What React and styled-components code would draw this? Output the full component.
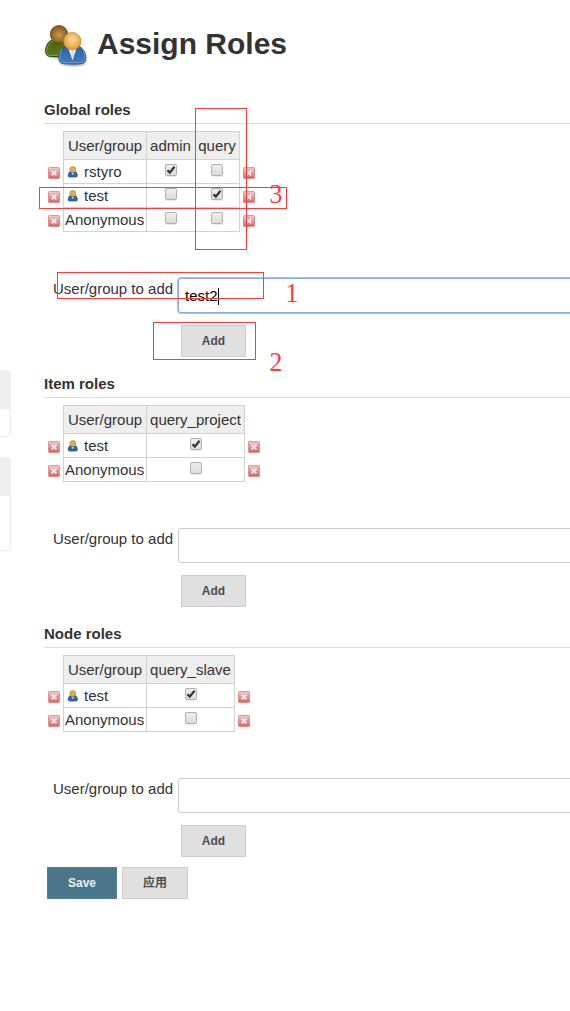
import React from 'react';
import styled, { createGlobalStyle } from 'styled-components';

const GlobalStyle = createGlobalStyle`
  body {
    margin: 0;
    background: #fff;
    color: #333;
    font: 15px/20px "Liberation Sans", Arial, "Noto Sans CJK SC", sans-serif;
    overflow: hidden;
  }
  * { box-sizing: border-box; }
`;

const Page = styled.div`
  position: relative;
  display: flex;
  height: 1011px;
  overflow: hidden;
`;

const SidePanel = styled.aside`
  flex: none;
  width: 11px;
  margin-right: 33px;
  padding-top: 370px;
`;

const Pane = styled.div`
  height: ${(p) => p.$height}px;
  margin-bottom: 20px;
  border: 1px solid #eee;
  border-left: 0;
  border-radius: 0 4px 4px 0;
  overflow: hidden;
`;

const PaneHeader = styled.div`
  height: 38px;
  background: #eee;
`;

const Main = styled.main`
  flex: 1;
  min-width: 0;
`;

const TitleBar = styled.header`
  display: flex;
  align-items: center;
  height: 100px;
  padding: 0 0 12px 0;
`;

const Title = styled.h1`
  margin: 0 0 0 5px;
  font-size: 30px;
  line-height: 36px;
  font-weight: bold;
  white-space: nowrap;
`;

const Section = styled.section`
  margin-bottom: ${(p) => (p.$last ? 10 : 17)}px;
`;

const Heading = styled.h2`
  height: 24px;
  margin: 0 0 7px;
  border-bottom: 1px solid #ddd;
  font-size: 15px;
  line-height: 20px;
`;

const Matrix = styled.div`
  margin-bottom: 46px;
`;

const Row = styled.div`
  display: grid;
  grid-template-columns: 19px 84px ${(p) => p.$cols.map((c) => `${c}px`).join(' ')} 20px;
  height: ${(p) => (p.$head ? 29 : 24)}px;
`;

const Cell = styled.div`
  display: flex;
  align-items: center;
  justify-content: ${(p) => (p.$name ? 'flex-start' : 'center')};
  border: solid #d3d3cd;
  border-width: ${(p) => (p.$head ? 1 : 0)}px 1px 1px ${(p) => (p.$first ? 1 : 0)}px;
  background: ${(p) => (p.$head ? '#eee' : '#fff')};
  padding-left: ${(p) => (p.$name ? 1 : 0)}px;
  padding-right: ${(p) => (p.$tight ? 1 : 0)}px;
  padding-top: ${(p) => (p.$head || p.$name ? 1 : 0)}px;
  white-space: nowrap;
`;

const UserName = styled.span`
  margin-left: 5px;
`;

const RemoveSlot = styled.span`
  display: flex;
  padding: 7px 0 0 ${(p) => (p.$right ? 3 : 4)}px;
`;

const Check = styled.span`
  display: flex;
  width: 12px;
  height: 12px;
  margin-bottom: 3px;
  border: 1px solid #b0b0b0;
  border-radius: 2px;
  background: linear-gradient(#eee, #dcdcdc);
  box-shadow: 0 1px 0 rgba(0, 0, 0, 0.08);
`;

const Field = styled.div`
  display: flex;
  height: 35px;
  padding-left: 9px;
  margin-bottom: 12px;
`;

const Label = styled.label`
  width: 125px;
  line-height: 22px;
  white-space: nowrap;
`;

const TextBox = styled.div`
  flex: 1;
  display: flex;
  align-items: center;
  margin-right: -10px;
  padding: 1px 0 0 6px;
  border: 1px solid ${(p) => (p.$focus ? '#86abe6' : '#ccc')};
  border-radius: 3px;
  box-shadow: ${(p) => (p.$focus ? '0 0 0 1px #a5c1f0' : 'none')};
  color: #000;
`;

const Caret = styled.span`
  width: 1px;
  height: 17px;
  background: #000;
`;

const Button = styled.button`
  display: block;
  width: ${(p) => p.$width}px;
  height: 32px;
  padding: 0;
  margin-left: ${(p) => p.$indent || 0}px;
  border: 1px solid ${(p) => (p.$primary ? '#4d819a' : '#ccc')};
  background: ${(p) => (p.$primary ? '#4b758b' : '#e0e0e0')};
  color: ${(p) => (p.$primary ? '#eee' : '#4d4d4d')};
  font: bold 12px/18px "Liberation Sans", Arial, "Noto Sans CJK SC", sans-serif;
`;

const Actions = styled.div`
  display: flex;
  gap: 5px;
  padding-left: 3px;
`;

const MarkBox = styled.div`
  position: absolute;
  left: ${(p) => p.$x}px;
  top: ${(p) => p.$y}px;
  width: ${(p) => p.$w}px;
  height: ${(p) => p.$h}px;
  border: 1px solid #fa3c3c;
`;

const MarkNumber = styled.span`
  position: absolute;
  left: ${(p) => p.$x}px;
  top: ${(p) => p.$y}px;
  color: #fa3c3c;
  font: 28px/28px "Liberation Serif", serif;
  transform: scaleX(0.92);
`;

function PeopleIcon() {
  return (
    <svg width="48" height="48" viewBox="0 0 48 48">
      <defs>
        <radialGradient id="brown" cx=".5" cy=".55" r=".55">
          <stop offset="0" stopColor="#c69a58" /><stop offset="1" stopColor="#875516" />
        </radialGradient>
        <radialGradient id="gold" cx=".5" cy=".4" r=".6">
          <stop offset="0" stopColor="#fbdca6" /><stop offset="1" stopColor="#e59a25" />
        </radialGradient>
        <linearGradient id="green" x2="0" y2="1">
          <stop offset="0" stopColor="#4b6410" /><stop offset="1" stopColor="#58781a" />
        </linearGradient>
        <linearGradient id="blue" x2="0" y2="1">
          <stop offset="0" stopColor="#2c62a6" /><stop offset="1" stopColor="#3f7cc0" />
        </linearGradient>
        <radialGradient id="shade">
          <stop offset="0" stopColor="#000" stopOpacity=".55" /><stop offset="1" stopColor="#000" stopOpacity="0" />
        </radialGradient>
      </defs>
      <ellipse cx="16" cy="36" rx="15" ry="4" fill="url(#shade)" />
      <ellipse cx="29.500" cy="43.500" rx="15" ry="4" fill="url(#shade)" />
      <path d="M1.500 31.500c0-6 3-10.500 7.500-12h12c5 2 7 6 7 12 0 3-2 5-5 5h-15.500c-4 0-6-2-6-5z" fill="url(#green)" stroke="#334a08" />
      <path d="M2.700 31.500c0-5 3-9 6.500-10.700M3 33c.5 2 2 2.500 4 2.500h7" fill="none" stroke="#8ea957" strokeWidth=".8" />
      <circle cx="15" cy="14.200" r="8.700" fill="url(#brown)" stroke="#704510" strokeWidth=".8" />
      <path d="M14.900 38.500c0-5.500 3-10.500 8-12.500h11c5 1.500 8 6.500 8 12.500 0 3.500-2 5.300-6 5.300h-15c-4 0-6-1.800-6-5.300z" fill="url(#blue)" stroke="#204a87" />
      <path d="M18 28.500c-1.500 2.500-2.100 6-2.100 10 0 3 1.700 4.300 5 4.300h15c3.300 0 5-1.300 5-4.300 0-4-.8-7.500-2.600-10" fill="none" stroke="#81a8d4" strokeWidth=".8" />
      <path d="M24.500 29h7.700L28.600 40.300z" fill="#fff" />
      <path d="M27.500 30h2l.5 5-1.400 4-1.400-4z" fill="#d4dce6" />
      <circle cx="28.300" cy="21.200" r="8.700" fill="url(#gold)" stroke="#cc861d" strokeWidth=".8" />
    </svg>
  );
}

function UserIcon() {
  return (
    <svg width="12" height="12" viewBox="0 0 12 12" style={{ marginLeft: 2 }}>
      <path d="M.8 9.300C.8 7 2.300 5.500 3.800 5h4c1.500.5 3 2 3 4.300 0 1.500-1 2.200-2.200 2.200h-5.600C1.600 11.500.8 10.800.8 9.300z" fill="#2d65a8" />
      <path d="M4.600 7h2.400L5.800 9.500z" fill="#b9cde6" />
      <circle cx="5.800" cy="3.600" r="3" fill="#e3aa54" stroke="#bd8536" strokeWidth=".7" />
    </svg>
  );
}

function RemoveIcon() {
  return (
    <svg width="12" height="13" viewBox="0 0 12 13">
      <defs>
        <linearGradient id="remove" x2="0" y2="1">
          <stop offset="0" stopColor="#f2cccc" /><stop offset=".5" stopColor="#e89393" /><stop offset="1" stopColor="#e06060" />
        </linearGradient>
      </defs>
      <rect x=".5" y=".5" width="11" height="11" rx=".8" fill="url(#remove)" stroke="#dc7575" strokeOpacity=".7" />
      <path d="M3.700 3.800l4.600 4.600M8.300 3.800L3.700 8.400" stroke="#fff" strokeOpacity=".9" strokeWidth="1.600" />
    </svg>
  );
}

function Checkbox({ checked }) {
  return (
    <Check>
      {checked && (
        <svg width="10" height="10" viewBox="0 0 10 10">
          <path d="M1.500 5.200L3.800 7.600 8.500 1.800" fill="none" stroke="#333" strokeWidth="2.200" />
        </svg>
      )}
    </Check>
  );
}

function Remove({ right }) {
  return <RemoveSlot $right={right}><RemoveIcon /></RemoveSlot>;
}

function RoleSection({ title, roles, widths, rows, value, last }) {
  return (
    <Section $last={last}>
      <Heading>{title}</Heading>
      <Matrix>
        <Row $head $cols={widths}>
          <span />
          <Cell $head $first>User/group</Cell>
          {roles.map((role, i) => <Cell $head $tight={widths[i] < 50} key={role}>{role}</Cell>)}
        </Row>
        {rows.map(([name, ...checks]) => (
          <Row key={name} $cols={widths}>
            <Remove />
            <Cell $first $name>
              {name === 'Anonymous' ? name : <><UserIcon /><UserName>{name}</UserName></>}
            </Cell>
            {checks.map((on, i) => (
              <Cell key={roles[i]} $tight={widths[i] < 45}><Checkbox checked={on} /></Cell>
            ))}
            <Remove right />
          </Row>
        ))}
      </Matrix>
      <Field>
        <Label>User/group to add</Label>
        <TextBox $focus={!!value}>{value}{value && <Caret />}</TextBox>
      </Field>
      <Button $width={65} $indent={137}>Add</Button>
    </Section>
  );
}

export default function App() {
  return (
    <Page>
      <GlobalStyle />
      <SidePanel>
        <Pane $height={67}><PaneHeader /></Pane>
        <Pane $height={94}><PaneHeader /></Pane>
      </SidePanel>
      <Main>
        <TitleBar>
          <PeopleIcon />
          <Title>Assign Roles</Title>
        </TitleBar>
        <RoleSection
          title="Global roles"
          roles={['admin', 'query']}
          widths={[49, 44]}
          rows={[['rstyro', true, false], ['test', false, true], ['Anonymous', false, false]]}
          value="test2"
        />
        <RoleSection
          title="Item roles"
          roles={['query_project']}
          widths={[98]}
          rows={[['test', true], ['Anonymous', false]]}
        />
        <RoleSection
          title="Node roles"
          roles={['query_slave']}
          widths={[88]}
          rows={[['test', true], ['Anonymous', false]]}
          last
        />
        <Actions>
          <Button $primary $width={70}>Save</Button>
          <Button $width={66}>应用</Button>
        </Actions>
      </Main>
      <MarkBox $x={195} $y={108} $w={52} $h={142} />
      <MarkBox $x={39} $y={187} $w={248} $h={22} />
      <MarkBox $x={57} $y={272} $w={207} $h={27} />
      <MarkBox $x={153} $y={322} $w={103} $h={38} />
      <MarkNumber $x={269} $y={180}>3</MarkNumber>
      <MarkNumber $x={285} $y={279}>1</MarkNumber>
      <MarkNumber $x={269} $y={348}>2</MarkNumber>
    </Page>
  );
}
